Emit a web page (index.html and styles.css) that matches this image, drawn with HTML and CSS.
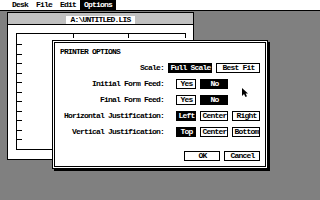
FILE: index.html
```html
<!DOCTYPE html>
<html>
<head>
<meta charset="utf-8">
<link rel="stylesheet" href="styles.css">
</head>
<body>
<div class="menubar">
  <span class="menu-item">Desk</span>
  <span class="menu-item">File</span>
  <span class="menu-item">Edit</span>
  <span class="menu-item active">Options</span>
</div>

<div class="window">
  <div class="titlebar"><span class="title">A:\UNTITLED.LIS</span></div>
  <svg class="canvas" width="185" height="134" viewBox="0 0 185 134">
    <g stroke="#000" stroke-width="1" fill="none" shape-rendering="crispEdges">
      <path d="M8 8.5H177.5"/>
      <path d="M65.5 8V13M120.5 8V13M177.5 8V13"/>
      <path d="M8.5 8V124.5H180"/>
      <path d="M8 19.5H14M8 29.5H14M8 38.5H14M8 48.5H14M8 57.5H14M8 67.5H14M8 76.5H14M8 86.5H14M8 95.5H14M8 105.5H14M8 114.5H14"/>
    </g>
  </svg>
</div>

<div class="dialog">
  <div class="dialog-inner">
    <div class="dlg-title">PRINTER OPTIONS</div>
    <div class="form">
      <div class="row">
        <span class="label">Scale:</span>
        <div class="btns btns-scale">
          <span class="btn sel w44">Full Scale</span>
          <span class="btn w44">Best Fit</span>
        </div>
      </div>
      <div class="row">
        <span class="label">Initial Form Feed:</span>
        <div class="btns">
          <span class="btn w20">Yes</span>
          <span class="btn sel w28">No</span>
        </div>
      </div>
      <div class="row">
        <span class="label">Final Form Feed:</span>
        <div class="btns">
          <span class="btn w20">Yes</span>
          <span class="btn sel w28">No</span>
        </div>
      </div>
      <div class="row">
        <span class="label">Horizontal Justification:</span>
        <div class="btns">
          <span class="btn sel w20">Left</span>
          <span class="btn w28">Center</span>
          <span class="btn w28">Right</span>
        </div>
      </div>
      <div class="row">
        <span class="label">Vertical Justification:</span>
        <div class="btns">
          <span class="btn sel w20">Top</span>
          <span class="btn w28">Center</span>
          <span class="btn w28">Bottom</span>
        </div>
      </div>
    </div>
    <div class="actions">
      <span class="btn w36 default">OK</span>
      <span class="btn w36">Cancel</span>
    </div>
  </div>
</div>

<svg class="cursor" width="7" height="10" viewBox="0 0 7 10">
  <path d="M0 0V8L2 6L3.5 9L5 8.3L3.6 5.4H6Z" fill="#000"/>
</svg>
</body>
</html>
```

FILE: styles.css
```css
html, body {
  margin: 0;
  padding: 0;
}
body {
  width: 320px;
  height: 200px;
  background: #808080;
  overflow: hidden;
  position: relative;
  font-family: "Liberation Mono", "DejaVu Sans Mono", monospace;
  font-size: 8px;
  font-weight: bold;
  letter-spacing: -0.8px;
  color: #000;
}
.menubar {
  height: 10px;
  background: #fff;
  border-bottom: 1px solid #000;
  display: flex;
  padding-left: 8px;
}
.menu-item {
  padding: 0 4px 0 4px;
  line-height: 10px;
  height: 10px;
  white-space: pre;
}
.menu-item.active {
  background: #000;
  color: #fff;
}
.window {
  position: absolute;
  left: 7px;
  top: 12px;
  width: 185px;
  height: 146px;
  border: 1px solid #000;
  background: #fff;
}
.titlebar {
  height: 11px;
  background: #c0c0c0;
  border-bottom: 1px solid #000;
  display: flex;
  justify-content: center;
  align-items: flex-end;
}
.title {
  background: #fff;
  padding: 0 4px;
  height: 8px;
  line-height: 8px;
}
.canvas {
  display: block;
}
.dialog {
  position: absolute;
  left: 52px;
  top: 40px;
  border: 1px solid #000;
  padding: 1px;
  background: #fff;
  box-shadow: 2px 2px 0 #000;
}
.dialog-inner {
  border: 1px solid #000;
  width: 210px;
  height: 123px;
  box-sizing: content-box;
  display: flex;
  flex-direction: column;
}
.dlg-title {
  margin: 5px 0 0 5px;
  line-height: 8px;
  height: 8px;
}
.form {
  margin-top: 7px;
  display: flex;
  flex-direction: column;
  gap: 6px;
}
.row {
  display: flex;
  height: 10px;
  align-items: center;
}
.label {
  width: 109px;
  text-align: right;
  line-height: 10px;
  white-space: pre;
}
.btns {
  display: flex;
  gap: 4px;
  margin-left: 12px;
}
.btns-scale {
  margin-left: 4px;
}
.btn {
  box-sizing: border-box;
  height: 10px;
  border: 1px solid #000;
  line-height: 8px;
  text-align: center;
  background: #fff;
  white-space: pre;
  padding-left: 1px;
}
.btn.sel {
  background: #000;
  color: #fff;
}
.w20 { width: 20px; }
.w28 { width: 28px; }
.w36 { width: 36px; }
.w44 { width: 44px; }
.actions {
  margin-top: 14px;
  display: flex;
  justify-content: flex-end;
  gap: 4px;
  padding-right: 5px;
}
.cursor {
  position: absolute;
  left: 242px;
  top: 88px;
}
```
